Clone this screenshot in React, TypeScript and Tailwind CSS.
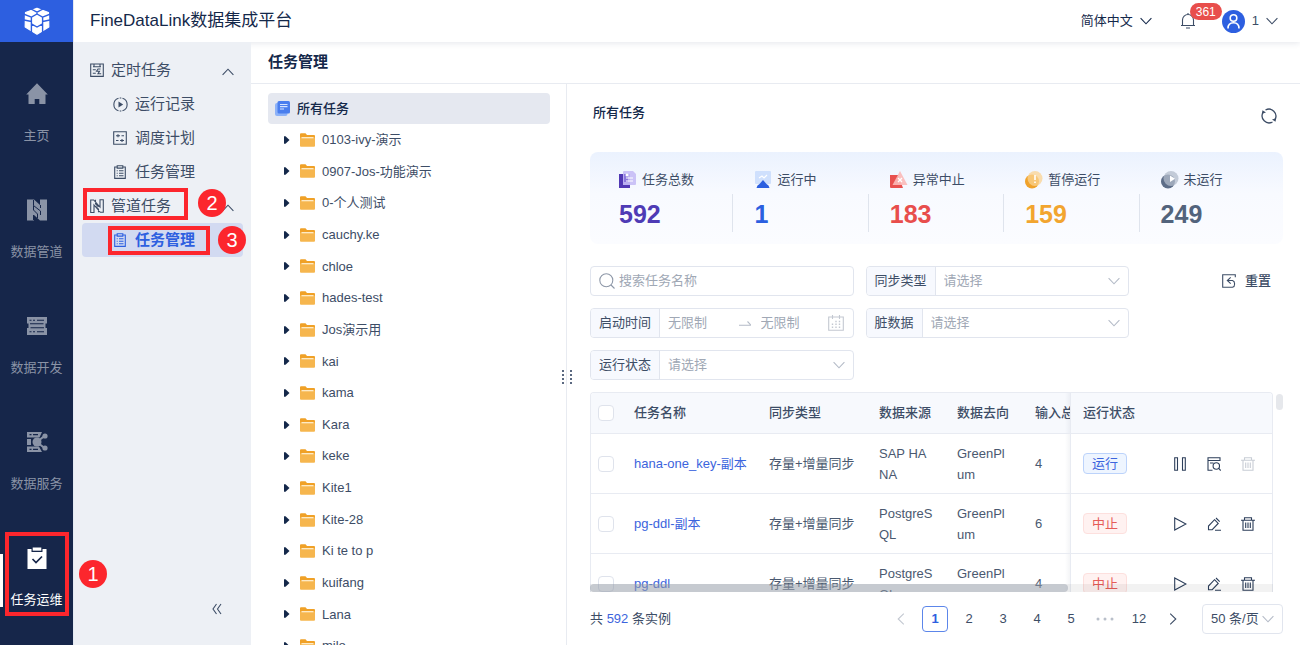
import type { ReactNode } from "react";

type IconProps = { className?: string };

const FOLDERS = [
  "0103-ivy-演示", "0907-Jos-功能演示", "0-个人测试", "cauchy.ke", "chloe", "hades-test",
  "Jos演示用", "kai", "kama", "Kara", "keke", "Kite1", "Kite-28", "Ki te to p", "kuifang", "Lana", "milo",
];

const ROWS = [
  { name: "hana-one_key-副本", type: "存量+增量同步", from: "SAP HANA", to: "GreenPlum", input: 4, running: true },
  { name: "pg-ddl-副本", type: "存量+增量同步", from: "PostgreSQL", to: "GreenPlum", input: 6, running: false },
  { name: "pg-ddl", type: "存量+增量同步", from: "PostgreSQL", to: "GreenPlum", input: 4, running: false },
];

/* ── Icons ─────────────────────────────────────────────── */

function Line({ className = "", size, children }: IconProps & { size: string; children: ReactNode }) {
  return (
    <svg viewBox={size} className={`shrink-0 ${className}`} fill="none" stroke="currentColor" strokeWidth="1.1" aria-hidden="true">
      {children}
    </svg>
  );
}

const Chevron = ({ className }: IconProps) => (
  <Line size="0 0 12 8" className={className}><path d="M.6 1.2 6 6.8l5.4-5.6" /></Line>
);

const LogoIcon = () => (
  <svg viewBox="0 0 26 28" className="h-7 w-[26px]" aria-hidden="true">
    <path d="M13 1.200 24.500 5.500l.3 14.500L13 27.200 1.200 20l.3-14.500z" fill="#fff" stroke="#fff" strokeWidth="1.200" strokeLinejoin="round" />
    <path
      d="m13 7 5.600 3.200v6.600L13 20l-5.600-3.200v-6.600zM7.400 10.200 0 7.200M18.600 10.200l7.400-3M7.400 16.800v9.500M18.600 16.800v9.500M7.400 14.500 0 13M18.600 14.500l7.400-1.500M7 2l6 3.200L19 2M13 5.200V7"
      fill="none"
      stroke="#2d5fe0"
      strokeWidth="1.400"
    />
  </svg>
);

const HomeIcon = () => (
  <svg viewBox="0 0 22 22" className="size-[22px]" fill="currentColor" aria-hidden="true">
    <path d="M11 .3 21.800 11.500h-2.300V20.500q0 .5-.5.5h-5.700v-5H8.700v5H3q-.5 0-.5-.5v-9H.2z" />
  </svg>
);

const PipeIcon = () => (
  <svg viewBox="0 0 22 22" className="size-[22px]" aria-hidden="true">
    <path d="M1 .5h7l6 5.500V.5h7v21h-7l-6-5.500v5.500H1z" fill="currentColor" />
    <path d="M7.500 1v5.500l7 5.500v4M7.500 21v-5M14.500 6v3M7.500 6.500V11l4 4v4" fill="none" stroke="#16264a" strokeWidth="1" />
  </svg>
);

const ServerIcon = () => (
  <svg viewBox="0 0 22 22" className="size-[22px]" aria-hidden="true">
    <path d="M1 2h20v6.500h-1.500V13H21v7H1v-7h1.500V8.500H1z" fill="currentColor" />
    <path d="M3.500 5.200h2M7 5.200h2M11 5.200h7M3.500 16.700h2M7 16.700h2M11 16.700h7M4 8.800h13.500M4.500 12.700H18" stroke="#16264a" strokeWidth="1.100" />
  </svg>
);

const ShareIcon = () => (
  <svg viewBox="0 0 22 22" className="size-[22px]" aria-hidden="true">
    <path d="M1 1h15l-2.500 5.500H1zM1 8h4v6H1zM1 15.500h12l3 5.500H1z" fill="currentColor" />
    <path d="M3.500 3.700h2M7 3.700h5M3.500 18.300h2M7 18.300h5" stroke="#16264a" strokeWidth="1.200" />
    <circle cx="11" cy="11" r="4.500" fill="currentColor" />
    <path d="m12 10 6.500-5M12 12l6.500 5" stroke="currentColor" strokeWidth="2.200" />
    <circle cx="19" cy="5" r="2.600" fill="currentColor" />
    <circle cx="19" cy="17" r="2.600" fill="currentColor" />
  </svg>
);

const OpsIcon = () => (
  <svg viewBox="0 0 22 22" className="size-[22px]" aria-hidden="true">
    <path d="M1.500 2h4v3h11V2h4v20h-19z" fill="#fff" />
    <path d="M6.700.5h8.600v3.200H6.700z" fill="#fff" />
    <path d="m6.500 12 3.500 3.500 6-6" fill="none" stroke="#16264a" strokeWidth="1.700" />
  </svg>
);

const TimedIcon = () => (
  <Line size="0 0 14 14" className="size-3.5">
    <path d="M.7 1h12.600v12.400H.7zM3 3.700h8M4 1v2.700M10 1v2.700M2.800 6.700h3M2.800 10.200h3M10.500 6H8L6.500 8.300h3L8 10.700h3.200" />
  </Line>
);

const PipeLineIcon = () => (
  <Line size="0 0 14 14" className="size-3.5">
    <path d="M.7 1h3L10 8V.7h3.300v12.600h-3L4 6v7.500H.7zM5.500.7v4l3 3.200M8.500 13.300v-3l-3-3.200" />
  </Line>
);

const RecordIcon = () => (
  <Line size="0 0 15 15" className="size-[15px]">
    <path d="M5.500 1.200a6.600 6.600 0 0 0 0 12.600M9.500 1.200a6.600 6.600 0 0 1 0 12.600M6.700 1h1.600M6.700 14h1.600" />
    <path d="M5.500 4.500v6l4.700-3z" fill="currentColor" stroke="none" />
  </Line>
);

const PlanIcon = () => (
  <Line size="0 0 14 14" className="size-3.5">
    <path d="M.7.7h12.600v12.600H.7zM3 4.700h4M8.500 4.700H11M5 3.200v3M3 9.500h2.500M7 9.500h4M9 8v3" />
  </Line>
);

const ClipboardIcon = () => (
  <Line size="0 0 14 14" className="size-3.5">
    <path d="M4 2H1.700v11.400h10.600V2H10M4.200.7h5.600v2.400H4.200zM3.700 5.700h1M6 5.700h4.500M3.700 8.200h1M6 8.200h4.500M3.700 10.700h1M6 10.700h4.500" />
  </Line>
);

const BellIcon = () => (
  <Line size="0 0 16 16" className="size-4">
    <path d="M1 12.500h14M2.500 12.500V7a5.500 5.500 0 0 1 11 0v5.500M8 0v1.500M6 15h4" />
  </Line>
);

const UserIcon = () => (
  <svg viewBox="0 0 23 23" className="size-[23px]" fill="none" stroke="#fff" strokeWidth="1.600" aria-hidden="true">
    <circle cx="11.500" cy="11.500" r="11.500" fill="#2d5fe0" stroke="none" />
    <circle cx="11.500" cy="8" r="3.300" />
    <path d="M6 18.500c0-4 2.300-5.700 5.500-5.700s5.500 1.700 5.500 5.700" />
  </svg>
);

const RefreshIcon = () => (
  <Line size="0 0 16 16" className="size-4">
    <path d="M4.500 2a7 7 0 0 1 9.500 9.500M11.500 14A7 7 0 0 1 2 4.500" strokeWidth="1.300" />
    <path d="M.8 5.800 1.500 2.200 5 4.500zM15.200 10.200l-.7 3.600L11 11.500z" fill="currentColor" stroke="none" />
  </Line>
);

const AllTasksIcon = () => (
  <svg viewBox="0 0 15 15" className="size-[15px] shrink-0" aria-hidden="true">
    <rect x="0" y="2" width="12.500" height="13" rx="2" fill="#8db2f8" />
    <rect x="2.500" y="0" width="12.500" height="12.500" rx="1.500" fill="#4a7eee" />
    <path d="M5 3.500h7.500M5 5.700h7.500M5 8h4" stroke="#d6e4ff" strokeWidth="1.200" />
  </svg>
);

const FolderIcon = () => (
  <svg viewBox="0 0 15 14" className="h-3.5 w-[15px] shrink-0" aria-hidden="true">
    <path d="M0 1.200Q0 .2 1 .2h4.500L7 2h7q1 0 1 1v4H0z" fill="#f0a127" />
    <path d="M0 4.500h15v8.200q0 1-1 1H1q-1 0-1-1z" fill="#f6b64e" />
    <path d="M1.500 4.700h12" stroke="#fff1d4" strokeWidth="1.200" />
  </svg>
);

const SearchIcon = () => (
  <Line size="0 0 16 16" className="size-4 text-[#8e98a8]">
    <circle cx="7.300" cy="7.300" r="6.500" />
    <path d="m12 12 3.500 3.500" />
  </Line>
);

const CalendarIcon = () => (
  <Line size="0 0 16 16" className="size-4 text-[#c3c8d1]">
    <path d="M.7 2h14.600v13.300H.7zM4.500 0v4M11.500 0v4" />
    <path d="M7.300 6.500h1.400M10.800 6.500h1.400M3.800 9.300h1.400M7.300 9.300h1.400M10.800 9.300h1.400M3.800 12.200h1.400M7.300 12.200h1.400M10.800 12.200h1.400" strokeWidth="1.400" />
  </Line>
);

const ResetIcon = () => (
  <Line size="0 0 14 14" className="size-3.5">
    <path d="M13.300 3.200V.7H.7v12.600H10.500a2.800 3.500 0 0 0 0-6.800H5.500M8.700 3.300 5.300 6.500l3.400 3.200" />
  </Line>
);

const PauseIcon = () => (
  <Line size="0 0 14 14" className="size-3.5"><path d="M1.700.7h2.800v12.600H1.700zM9.500.7h2.800v12.600H9.500z" /></Line>
);

const PlayIcon = () => (
  <Line size="0 0 14 14" className="size-3.5"><path d="M1.700 1v12L13 7z" /></Line>
);

const InspectIcon = () => (
  <Line size="0 0 14 14" className="size-3.5">
    <path d="M13 4V.7H1v12.600h4.500M1 3.500h12M3 6h3.500" />
    <circle cx="9.300" cy="9" r="3.200" />
    <path d="m11.500 11.200 2.200 2.300" />
  </Line>
);

const EditIcon = () => (
  <Line size="0 0 14 14" className="size-3.5">
    <path d="m9 1 3.700 3.700M7.500 2.700l3.700 3.700-6 6.300H1.500V9zM8 13.300h6" />
  </Line>
);

const TrashIcon = ({ className = "" }: IconProps) => (
  <Line size="0 0 14 14" className={`size-3.5 ${className}`}>
    <path d="M0 3.200h14M3.500 3V.7h7V3M2 3v10.300h10V3M4.700 5.500V11M7 5.500V11M9.300 5.500V11" />
  </Line>
);

/* stat card icons */
const STAT_ICONS = {
  total: (
    <>
      <path d="M0 3h11v14H0z" fill="#5138b4" />
      <path d="M4 1q0-1 1-1h9l3 3v10q0 1-1 1H4z" fill="#c6bcf6" opacity=".9" />
      <path d="M5 3h4v8H5z" fill="#8b77dc" />
      <path d="M7 7h7M7 10h7" stroke="#fff" strokeWidth="1.200" />
      <circle cx="8" cy="4" r="1.500" fill="#fff" />
    </>
  ),
  running: (
    <>
      <rect x="1" y="0" width="16" height="13" rx="1" fill="#cfe0fd" />
      <path d="M2.500 17q.5-3 3-4l3.500-4 3.500 4q2.500 1 3 4z" fill="#2b5fe0" />
      <path d="m5 7 3-2 2 2 3-3" fill="none" stroke="#fff" strokeWidth="1.200" />
    </>
  ),
  failed: (
    <>
      <path d="M0 4h8l5 13H1q-1 0-1-1z" fill="#e8504e" />
      <path d="M10 0l7.500 14h-15z" fill="#fbb9b8" opacity=".9" />
      <path d="m8 7 4 4m0-4-4 4" stroke="#fff" strokeWidth="1.300" />
    </>
  ),
  paused: (
    <>
      <circle cx="7" cy="10.500" r="7" fill="#f0a22b" />
      <circle cx="10" cy="7.500" r="7.500" fill="#fbd391" opacity=".75" />
      <path d="M10 4v5M10 10.500V12" stroke="#fff" strokeWidth="1.600" />
    </>
  ),
  idle: (
    <>
      <circle cx="7" cy="10.500" r="7" fill="#5d6d88" />
      <circle cx="10" cy="7.500" r="7.500" fill="#b3bccb" opacity=".75" />
      <path d="M9 4.500v6.500l5-3.300z" fill="#fff" />
    </>
  ),
};

const STATS = [
  { icon: STAT_ICONS.total, label: "任务总数", value: 592, color: "text-[#4f3bb5]" },
  { icon: STAT_ICONS.running, label: "运行中", value: 1, color: "text-[#2b5fe0]" },
  { icon: STAT_ICONS.failed, label: "异常中止", value: 183, color: "text-[#e84e4c]" },
  { icon: STAT_ICONS.paused, label: "暂停运行", value: 159, color: "text-[#f2a52f]" },
  { icon: STAT_ICONS.idle, label: "未运行", value: 249, color: "text-[#52637c]" },
];

/* ── Callouts ──────────────────────────────────────────── */

const MarkBox = ({ className }: { className: string }) => (
  <span className={`pointer-events-none absolute z-20 border-4 border-[#fc262d] ${className}`} />
);

const MarkDot = ({ n, className }: { n: number; className: string }) => (
  <span className={`absolute z-30 flex size-7 items-center justify-center rounded-full bg-[#fc262d] text-xl leading-none text-white ${className}`}>
    {n}
  </span>
);

/* ── Left rail ─────────────────────────────────────────── */

function Rail() {
  const items = [
    { label: "主页", icon: <HomeIcon /> },
    { label: "数据管道", icon: <PipeIcon /> },
    { label: "数据开发", icon: <ServerIcon /> },
    { label: "数据服务", icon: <ShareIcon /> },
    { label: "任务运维", icon: <OpsIcon />, active: true },
  ];
  return (
    <nav className="relative z-20 flex w-[74px] shrink-0 flex-col border-r border-[#e4e9f2] bg-[#16264a]">
      <a href="#home" aria-label="FineDataLink" className="flex h-[42px] shrink-0 items-center justify-center bg-[#2d5fe0]">
        <LogoIcon />
      </a>
      <div className="flex flex-col pt-2.5">
        {items.map((item) => (
          <a
            key={item.label}
            href="#nav"
            className={`relative flex h-[116px] flex-col items-center gap-[21px] pt-[31px] text-[13px] leading-5 ${item.active ? "text-white" : "text-[#8a93a6]"}`}
          >
            {item.active && <span className="absolute top-[38px] left-0 h-[53px] w-[3px] bg-white" />}
            {item.icon}
            {item.label}
            {item.active && (
              <>
                <MarkBox className="top-4 left-[5px] h-[84px] w-16" />
                <MarkDot n={1} className="top-11 left-[79px]" />
              </>
            )}
          </a>
        ))}
      </div>
    </nav>
  );
}

/* ── Secondary menu ────────────────────────────────────── */

function Menu() {
  return (
    <aside className="relative z-10 flex w-[177px] shrink-0 flex-col bg-[#edf0f5] px-2 pt-[11px] text-[15px] text-[#3d4d66]">
      <button className="flex h-[34px] items-center gap-[7px] pr-[9px] pl-2">
        <TimedIcon />
        定时任务
        <Chevron className="mt-1 ml-auto h-2 w-3 rotate-180" />
      </button>
      <a href="#record" className="flex h-[34px] items-center gap-[7px] pl-[31px]"><RecordIcon />运行记录</a>
      <a href="#plan" className="flex h-[34px] items-center gap-2 pl-[31px]"><PlanIcon />调度计划</a>
      <a href="#task" className="flex h-[34px] items-center gap-2 pl-[31px]"><ClipboardIcon />任务管理</a>
      <button className="relative flex h-[34px] items-center gap-[7px] pr-[9px] pl-2">
        <PipeLineIcon />
        管道任务
        <Chevron className="mt-1 ml-auto h-2 w-3 rotate-180" />
        <MarkBox className="-top-px left-px h-8 w-[105px]" />
        <MarkDot n={2} className="top-0 left-[116px]" />
      </button>
      <a href="#pipe-task" className="relative flex h-[34px] items-center gap-2 rounded bg-[#d2daf1] pl-[31px] font-bold text-[#2d5fe0]">
        <ClipboardIcon />
        任务管理
        <MarkBox className="top-[3px] left-[26px] h-[29px] w-[102px]" />
        <span className="font-normal"><MarkDot n={3} className="top-[3px] left-[136px]" /></span>
      </a>
      <button aria-label="收起" className="mt-auto mr-5 mb-[30px] self-end">
        <Line size="0 0 12 12" className="size-3"><path d="M5.500 1 2 6l3.500 5M10 1 6.500 6l3.500 5" /></Line>
      </button>
    </aside>
  );
}

/* ── Task tree ─────────────────────────────────────────── */

function Tree() {
  return (
    <section className="relative flex w-[316px] shrink-0 flex-col border-r border-[#e8ebf1] px-[17px] pt-[9px] text-[13px]">
      <button className="flex h-[31px] w-[282px] shrink-0 items-center gap-[7px] rounded bg-[#e5e8f0] pl-[7px] font-medium text-[#14284a]">
        <AllTasksIcon />
        所有任务
      </button>
      <ul className="-mb-[17px] flex flex-1 flex-col">
        {FOLDERS.map((name) => (
          <li key={name} className="flex min-h-0 flex-1 items-center pl-4 text-[#3d4d66]">
            <svg viewBox="0 0 6 8" className="mr-2.5 h-2 w-1.5" fill="#14284a" aria-hidden="true"><path d="M0 .3h1.500L5.500 4 1.500 7.700H0z" /></svg>
            <FolderIcon />
            <span className="ml-[7px]">{name}</span>
          </li>
        ))}
      </ul>
      <svg viewBox="0 0 10 14" className="absolute top-[286px] -right-1.5 h-3.5 w-2.5" fill="#5a6880" aria-hidden="true">
        <path d="M0 0h2v2H0zM8 0h2v2H8zM0 4h2v2H0zM8 4h2v2H8zM0 8h2v2H0zM8 8h2v2H8zM0 12h2v2H0zM8 12h2v2H8z" />
      </svg>
    </section>
  );
}

/* ── Filters ───────────────────────────────────────────── */

const BOX = "flex h-[30px] items-center overflow-hidden rounded border border-[#e1e5ee] bg-white";
const TAG = "flex h-full shrink-0 items-center border-r border-[#e1e5ee] bg-[#f7f9fe] px-2 text-[#3d4d66]";

function FilterSelect({ id, label }: { id: string; label: string }) {
  return (
    <div className={`relative ${BOX}`}>
      <label htmlFor={id} className={TAG}>{label}</label>
      <select id={id} className="h-full min-w-0 flex-1 appearance-none bg-transparent px-2 text-[#a0a8b5] outline-none">
        <option>请选择</option>
      </select>
      <Chevron className="pointer-events-none absolute right-2 h-2 w-3 text-[#b4bbc7]" />
    </div>
  );
}

function Filters() {
  return (
    <div className="mt-[22px] flex items-start">
      <div className="grid flex-1 grid-cols-2 gap-3">
        <label className={`gap-1 px-2 ${BOX}`}>
          <SearchIcon />
          <input aria-label="搜索任务名称" placeholder="搜索任务名称" className="min-w-0 flex-1 outline-none placeholder:text-[#a0a8b5]" />
        </label>
        <FilterSelect id="sync-type" label="同步类型" />
        <div className={BOX}>
          <label htmlFor="start-from" className={TAG}>启动时间</label>
          <input id="start-from" placeholder="无限制" className="min-w-0 flex-1 pl-2 outline-none placeholder:text-[#a0a8b5]" />
          <Line size="0 0 12 6" className="h-1.5 w-3 text-[#b4bbc7]"><path d="M0 5.200h12L8.500 1.500" /></Line>
          <input aria-label="结束时间" placeholder="无限制" className="w-[61px] min-w-0 pl-2.5 outline-none placeholder:text-[#a0a8b5]" />
          <span className="pr-[9px] pl-4"><CalendarIcon /></span>
        </div>
        <FilterSelect id="dirty-data" label="脏数据" />
        <FilterSelect id="run-state" label="运行状态" />
      </div>
      <button className="flex h-[30px] w-[154px] items-center justify-end gap-[9px] pr-3 font-medium text-[#3d4d66]">
        <ResetIcon />
        重置
      </button>
    </div>
  );
}

/* ── Task table ────────────────────────────────────────── */

const Check = ({ label }: { label: string }) => (
  <input type="checkbox" aria-label={label} className="block size-4 appearance-none rounded-sm border border-[#dfe3ec] bg-white" />
);

/* shade along the left edge of the pinned columns */
const PinShade = () => (
  <span className="absolute inset-y-0 -left-1.5 w-1.5 border-r border-[#e8ebf2] bg-linear-to-l from-[#1e325a]/5 to-transparent" />
);

function TaskTable() {
  return (
    <div className="relative mt-3 min-h-0 flex-1 pr-2.5">
      <div className="h-full overflow-hidden rounded-t border border-b-0 border-[#e8ebf2]">
        <table className="w-full table-fixed border-separate border-spacing-0 text-left text-[#4a5970]">
          <colgroup>
            <col className="w-[31px]" />
            <col />
            <col className="w-[110px]" />
            <col className="w-[78px]" />
            <col className="w-[78px]" />
            <col className="w-12" />
            <col className="w-[82px]" />
            <col className="w-[119px]" />
          </colgroup>
          <thead>
            <tr className="h-[41px] bg-[#f7f9fd] text-[#3d4d66] *:border-b *:border-[#e8ebf2] *:font-medium">
              <th className="pl-[7px]"><Check label="全选" /></th>
              <th className="px-3">任务名称</th>
              <th className="px-3">同步类型</th>
              <th className="px-3">数据来源</th>
              <th className="px-3">数据去向</th>
              <th className="overflow-hidden pl-3 whitespace-nowrap">输入总</th>
              <th className="relative bg-[#f7f9fd] px-3 whitespace-nowrap"><PinShade />运行状态</th>
              <th aria-label="操作" />
            </tr>
          </thead>
          <tbody>
            {ROWS.map((row) => (
              <tr key={row.name} className="h-[60px] leading-[21px] *:border-b *:border-[#e8ebf2]">
                <td className="pl-[7px]"><Check label={row.name} /></td>
                <td className="pl-3 whitespace-nowrap"><a href="#task" className="text-[#3c64dd]">{row.name}</a></td>
                <td className="pl-3 whitespace-nowrap">{row.type}</td>
                <td className="px-3 break-all">{row.from}</td>
                <td className="px-3 break-all">{row.to}</td>
                <td className="px-3">{row.input}</td>
                <td className="relative px-3">
                  <PinShade />
                  {row.running ? (
                    <span className="flex h-[21px] w-11 items-center justify-center rounded border border-[#bcd3fb] bg-[#eef5ff] text-[#3c64dd]">运行</span>
                  ) : (
                    <span className="flex h-[21px] w-11 items-center justify-center rounded border border-[#fde0de] bg-[#fff2f1] text-[#e55c58]">中止</span>
                  )}
                </td>
                <td>
                  <div className="flex gap-5 pl-5 text-[#2c3e5a]">
                    <button aria-label={row.running ? "暂停" : "启动"}>{row.running ? <PauseIcon /> : <PlayIcon />}</button>
                    <button aria-label={row.running ? "查看" : "编辑"}>{row.running ? <InspectIcon /> : <EditIcon />}</button>
                    <button aria-label="删除" disabled={row.running}><TrashIcon className={row.running ? "text-[#c8cdd5]" : ""} /></button>
                  </div>
                </td>
              </tr>
            ))}
          </tbody>
        </table>
      </div>
      {/* scrollbars */}
      <div className="absolute right-2.5 bottom-0 left-0 h-2 bg-black/5">
        <div className="h-2 w-[70%] rounded-full bg-[#9aa1ad]/50" />
      </div>
      <div className="absolute top-0.5 right-0 h-4 w-[7px] rounded-full bg-[#e6e8ec]" />
    </div>
  );
}

function Pager() {
  return (
    <div className="flex h-[53px] shrink-0 items-center text-[#3d4d66]">
      <span>共 <span className="text-[#3c64dd]">592</span> 条实例</span>
      <div className="ml-auto flex items-center gap-2">
        <button aria-label="上一页" className="flex size-[26px] items-center justify-center text-[#c3c8d1]"><Chevron className="h-2 w-3 rotate-90" /></button>
        <button className="size-[26px] rounded-sm border border-[#5c86ea] font-bold text-[#2d5fe0]">1</button>
        {[2, 3, 4, 5].map((n) => <button key={n} className="size-[26px]">{n}</button>)}
        <svg viewBox="0 0 26 26" className="size-[26px]" fill="#b9bfca" aria-hidden="true">
          <circle cx="6" cy="13" r="1.500" /><circle cx="13" cy="13" r="1.500" /><circle cx="20" cy="13" r="1.500" />
        </svg>
        <button className="size-[26px]">12</button>
        <button aria-label="下一页" className="flex size-[26px] items-center justify-center"><Chevron className="h-2 w-3 -rotate-90" /></button>
      </div>
      <div className="relative ml-4 flex h-[30px] w-[81px] items-center rounded border border-[#e1e5ee]">
        <select aria-label="每页条数" className="h-full w-full appearance-none bg-transparent pl-2 outline-none">
          <option>50 条/页</option>
        </select>
        <Chevron className="pointer-events-none absolute right-2 h-2 w-3 text-[#b4bbc7]" />
      </div>
    </div>
  );
}

export default function App() {
  return (
    <div className="flex h-screen overflow-hidden bg-white font-['Liberation_Sans','Noto_Sans_CJK_SC',sans-serif] text-[13px] text-[#3d4d66]">
      <Rail />
      <div className="flex min-w-0 flex-1 flex-col">
        {/* top bar */}
        <header className="relative z-10 flex h-[42px] shrink-0 items-center bg-white pr-[22px] pl-4 shadow-[0_1px_6px_rgba(30,50,90,0.12)]">
          <h1 className="text-[17px] text-[#14284a]">FineDataLink数据集成平台</h1>
          <button className="ml-auto flex items-center gap-[7px] text-[#14284a]">
            简体中文
            <Chevron className="h-2 w-3" />
          </button>
          <button aria-label="消息" className="relative ml-7">
            <BellIcon />
            <span className="absolute -top-2.5 left-2.5 flex h-[17px] items-center rounded-full bg-[#e84e4c] px-1.5 text-xs text-white">361</span>
          </button>
          <button className="ml-[26px] flex items-center gap-[7px]">
            <UserIcon />
            1
            <Chevron className="h-2 w-3" />
          </button>
        </header>

        <div className="flex min-h-0 flex-1">
          <Menu />
          <div className="flex min-w-0 flex-1 flex-col">
            <h2 className="flex h-[42px] shrink-0 items-center border-b border-[#e8ebf1] pl-[17px] text-[15px] font-bold text-[#14284a]">任务管理</h2>
            <div className="flex min-h-0 flex-1">
              <Tree />
              <main className="flex min-w-0 flex-1 flex-col pr-[17px] pl-[23px]">
                <div className="flex h-[68px] shrink-0 items-center justify-between pr-1.5 pb-2.5">
                  <h3 className="pl-[3px] font-medium text-[#14284a]">所有任务</h3>
                  <button aria-label="刷新" className="pt-1.5"><RefreshIcon /></button>
                </div>
                <div className="grid h-[92px] shrink-0 grid-cols-5 rounded-lg bg-linear-to-b from-[#ebf2fe] via-[#f8faff] via-45% to-[#fbfcff] px-2">
                  {STATS.map((stat) => (
                    <div key={stat.label} className="group relative pt-[18px] pl-[21px]">
                      <div className="flex h-5 items-center gap-[5px]">
                        <svg viewBox="0 0 18 18" className="size-[18px]" aria-hidden="true">{stat.icon}</svg>
                        {stat.label}
                      </div>
                      <div className={`mt-2 text-[25px] leading-8 font-bold ${stat.color}`}>{stat.value}</div>
                      <span className="absolute right-0 bottom-3 h-[38px] w-px bg-[#dfe4ed] group-last:hidden" />
                    </div>
                  ))}
                </div>
                <Filters />
                <TaskTable />
                <Pager />
              </main>
            </div>
          </div>
        </div>
      </div>
    </div>
  );
}
